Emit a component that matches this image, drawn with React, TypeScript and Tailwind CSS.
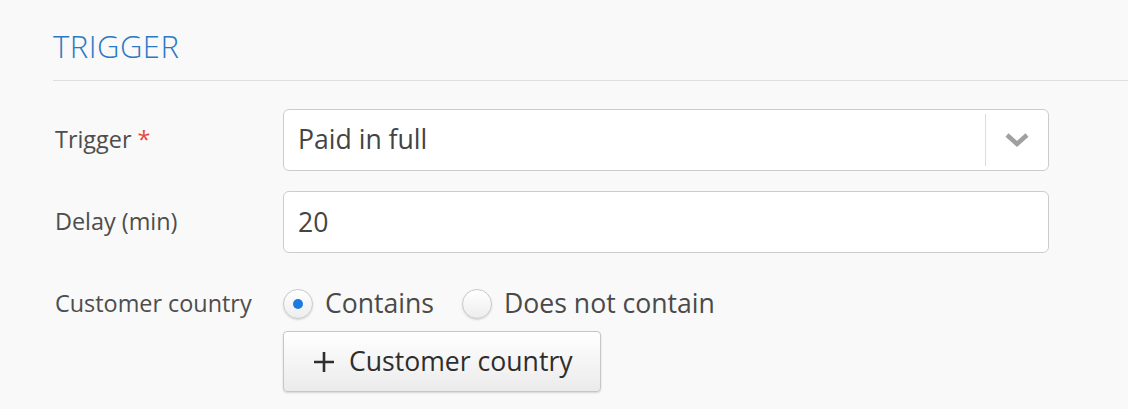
import React, { useState } from 'react';

const font = { fontFamily: '"Open Sans", "Liberation Sans", sans-serif' };

export default function App() {
    const [mode, setMode] = useState<'contains' | 'not'>('contains');
    const [delay, setDelay] = useState('20');

    const radio = (value: 'contains' | 'not', label: string) => (
        <label className="flex items-center gap-3 cursor-pointer" onClick={() => setMode(value)}>
            <span className="w-[30px] h-[30px] rounded-full border border-[#c9c9c9] bg-gradient-to-b from-white to-[#ededed] shadow-[0_1px_2px_rgba(0,0,0,0.15)] flex items-center justify-center">
                {mode === value && <span className="w-[10px] h-[10px] rounded-full bg-[#1b7be0]" />}
            </span>
            <span className="text-[26.6px] text-[#4a4a4a]">{label}</span>
        </label>
    );

    return (
        <div className="w-[1128px] h-[409px] bg-[#f9f9f9] overflow-hidden pl-[53px]" style={font}>
            <div className="pt-[27px] pb-[15px] border-b border-[#dedede]">
                <h2 className="text-[31px] leading-[38px] font-light text-[#2b78c5] tracking-[0.5px]">TRIGGER</h2>
            </div>

            <div className="mt-[28px] flex flex-col gap-[20px]">
                {/* Trigger select */}
                <div className="flex items-center">
                    <div className="w-[230px] pl-[2px] text-[23.4px] text-[#4d4d4d]">
                        Trigger <span className="text-[#e5473d]">*</span>
                    </div>
                    <div className="w-[766px] h-[62px] bg-white border border-[#cccccc] rounded-[6px] flex items-center">
                        <div className="flex-1 pl-[14px] text-[26.6px] text-[#444]">Paid in full</div>
                        <div className="w-[63px] h-[52px] border-l border-[#dddddd] flex items-center justify-center">
                            <svg width="26" height="16" viewBox="0 0 26 16" fill="none">
                                <path d="M3 3l10 9 10-9" stroke="#a0a0a0" strokeWidth="4.5" strokeLinejoin="miter" />
                            </svg>
                        </div>
                    </div>
                </div>

                {/* Delay */}
                <div className="flex items-center">
                    <div className="w-[230px] pl-[2px] text-[23.4px] text-[#4d4d4d]">Delay (min)</div>
                    <input
                        value={delay}
                        onChange={e => setDelay(e.target.value)}
                        className="w-[766px] h-[62px] bg-white border border-[#cccccc] rounded-[6px] pl-[14px] text-[26.6px] text-[#444] outline-none"
                        style={font}
                    />
                </div>

                {/* Customer country */}
                <div className="flex items-start">
                    <div className="w-[230px] h-[62px] pl-[2px] flex items-center text-[23.4px] text-[#4d4d4d]">Customer country</div>
                    <div className="flex flex-col">
                        <div className="flex items-center gap-[28px] h-[62px]">
                            {radio('contains', 'Contains')}
                            {radio('not', 'Does not contain')}
                        </div>
                        <button className="mt-[-4px] w-[318px] h-[61px] rounded-[4px] border border-[#c6c6c6] bg-gradient-to-b from-white to-[#ebebeb] shadow-[0_1px_2px_rgba(0,0,0,0.15)] flex items-center pl-[29px] gap-[14px] text-[26.6px] text-[#2e2e2e]" style={font}>
                            <svg width="22" height="22" viewBox="0 0 22 22">
                                <path d="M11 1v20M1 11h20" stroke="#2e2e2e" strokeWidth="2.6" />
                            </svg>
                            Customer country
                        </button>
                    </div>
                </div>
            </div>
        </div>
    );
}
